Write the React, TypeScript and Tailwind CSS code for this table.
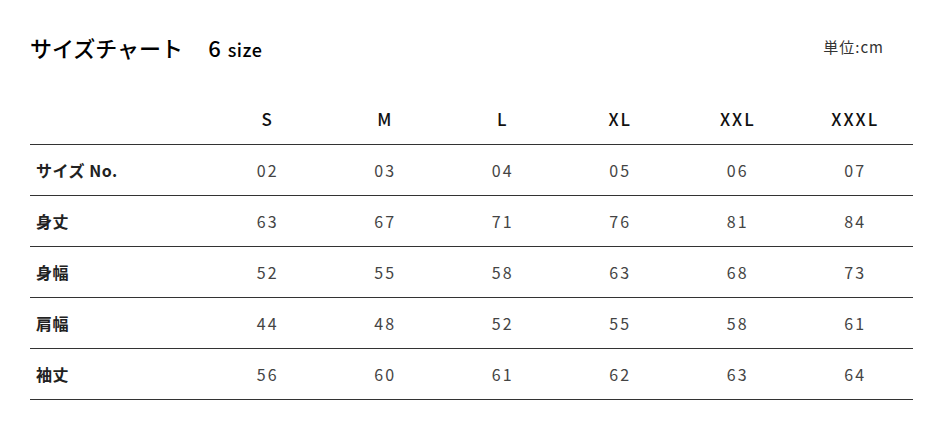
import React from "react";

const sizes = ["S", "M", "L", "XL", "XXL", "XXXL"];
const rows: [string, string[]][] = [
  ["サイズ No.", ["02", "03", "04", "05", "06", "07"]],
  ["身丈", ["63", "67", "71", "76", "81", "84"]],
  ["身幅", ["52", "55", "58", "63", "68", "73"]],
  ["肩幅", ["44", "48", "52", "55", "58", "61"]],
  ["袖丈", ["56", "60", "61", "62", "63", "64"]],
];

export default function App() {
  return (
    <div
      className="w-[940px] h-[425px] bg-white text-[#222] pl-[30px] pr-[27px] pt-[30px]"
      style={{ fontFamily: '"Noto Sans CJK JP", "Noto Sans", sans-serif' }}
    >
      <div className="flex items-center justify-between h-[34px]">
        <div className="flex items-baseline text-black">
          <span className="text-[22px] font-medium">サイズチャート</span>
          <span className="ml-[25px] text-[22px] font-medium">6</span>
          <span className="ml-[7px] text-[18px] font-medium tracking-[0.5px]">size</span>
        </div>
        <div className="text-[15px] text-[#333] pr-[29px] tracking-[1px]">単位:cm</div>
      </div>
      <div className="mt-[30px]">
        <div className="grid grid-cols-[178px_repeat(6,1fr)] h-[51px] border-b border-[#333] items-center">
          <div />
          {sizes.map((s) => (
            <div key={s} className="text-center text-[17px] font-medium text-[#111] tracking-[2px] pl-[2px]">
              {s}
            </div>
          ))}
        </div>
        {rows.map(([label, vals]) => (
          <div
            key={label}
            className="grid grid-cols-[178px_repeat(6,1fr)] h-[51px] border-b border-[#333] items-center"
          >
            <div className="pl-[6px] text-[16px] font-bold text-[#222] tracking-[0.5px]">{label}</div>
            {vals.map((v, i) => (
              <div key={i} className="text-center text-[16px] text-[#444] tracking-[2px] pl-[2px]">
                {v}
              </div>
            ))}
          </div>
        ))}
      </div>
    </div>
  );
}
